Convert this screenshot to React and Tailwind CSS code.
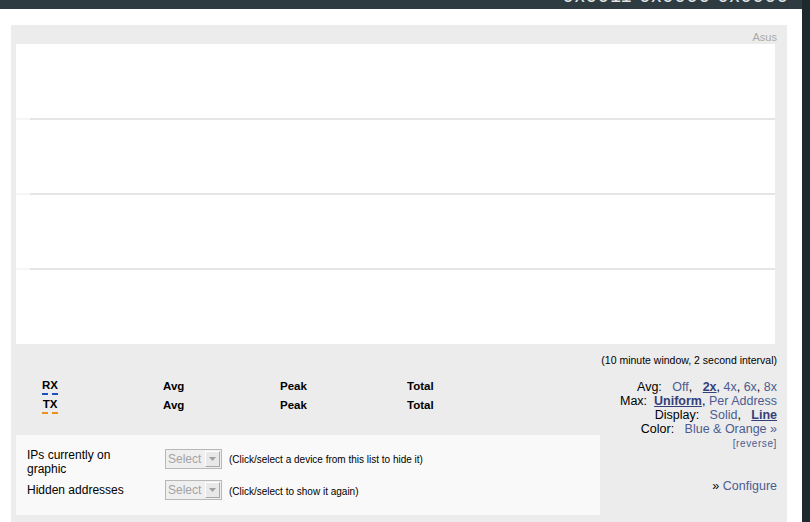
import React from 'react'

const font = { fontFamily: '"Liberation Sans", Arial, sans-serif' }

const Dash = ({ color }) => (
  <svg width="16" height="2" className="block">
    <rect x="0" y="0" width="6" height="2" fill={color} />
    <rect x="10" y="0" width="6" height="2" fill={color} />
  </svg>
)

const FakeSelect = () => (
  <div className="flex h-[20px] w-[57px] items-stretch border border-[#b8b8b8] bg-[#efefef]">
    <span className="flex-1 pl-[2px] text-[12px] leading-[18px] text-[#a3a3a3]">Select</span>
    <span className="my-[1px] mr-[1px] flex w-[15px] items-center justify-center border-l border-t border-white border-r border-b border-r-[#a8a8a8] border-b-[#a8a8a8] bg-[#e8e8e8]">
      <svg width="7" height="4"><polygon points="0,0 7,0 3.5,4" fill="#a0a0a0" /></svg>
    </span>
  </div>
)

const Link = ({ children, strong }) => (
  <span className={strong ? 'font-bold underline text-[#33407a]' : 'text-[#4c5c91]'}>{children}</span>
)

export default function App() {
  return (
    <div className="flex h-[522px] w-[810px] overflow-hidden bg-white text-black" style={font}>
      <div className="flex w-[802px] flex-col">
        <div className="relative h-[9px] overflow-hidden bg-[#2e3b40]">
          <div className="absolute right-[13px] top-[-15px] text-[20px] leading-[20px] tracking-[1px] text-[#dfe4e6]">
            0x0011 0x0000 0x0000
          </div>
        </div>
        <div className="ml-[11px] mt-[16px] w-[776px] flex-1 bg-[#ececec]">
          <div className="h-[19px] pr-[10px] text-right text-[11px] leading-[24px] text-[#aaaaaa]">Asus</div>
          <div className="ml-[5px] h-[300px] w-[759px] bg-white">
            <svg width="759" height="300" className="block">
              {[75, 150, 225].map((y) => (
                <g key={y}>
                  <rect x="0" y={y - 1} width="14" height="2" fill="#f6f6f6" />
                  <rect x="14" y={y - 1} width="745" height="2" fill="#e5e5e5" />
                </g>
              ))}
            </svg>
          </div>
          <div className="h-[25px] pr-[10px] pt-[10px] text-right text-[10.5px] leading-[12px]">
            (10 minute window, 2 second interval)
          </div>
          <div className="flex">
            <div className="ml-[5px] w-[584px]">
              <div className="pt-[8px] text-[11.5px] font-bold">
                {[['RX', '#1f4fc4'], ['TX', '#f28c1a']].map(([k, c]) => (
                  <div key={k} className="flex h-[19px] items-center">
                    <div className="w-[147px] pl-[26px]">
                      <div className="flex w-[16px] flex-col items-center">
                        <span className="leading-[12px]">{k}</span>
                        <span className="mt-[2px]"><Dash color={c} /></span>
                      </div>
                    </div>
                    <div className="w-[117px]">Avg</div>
                    <div className="w-[127px]">Peak</div>
                    <div>Total</div>
                  </div>
                ))}
              </div>
              <div className="mt-[20px] h-[80px] bg-[#f9f9f9] pl-[11px] pt-[13px] text-[12px]">
                <div className="flex items-start">
                  <div className="w-[138px] leading-[14px]">IPs currently on<br />graphic</div>
                  <div className="mt-[1px]"><FakeSelect /></div>
                  <div className="ml-[7px] mt-[6px] text-[10px] leading-[12px]">(Click/select a device from this list to hide it)</div>
                </div>
                <div className="mt-[4px] flex items-start">
                  <div className="mt-[3px] w-[138px] leading-[14px]">Hidden addresses</div>
                  <FakeSelect />
                  <div className="ml-[7px] mt-[6px] text-[10px] leading-[12px]">(Click/select to show it again)</div>
                </div>
              </div>
            </div>
            <div className="flex-1 pr-[10px] pt-[11px] text-right text-[12.5px] leading-[14px]">
              <div>Avg:&nbsp;&nbsp; <Link>Off</Link>,&nbsp;&nbsp; <Link strong>2x</Link>, <Link>4x</Link>, <Link>6x</Link>, <Link>8x</Link></div>
              <div>Max:&nbsp; <Link strong>Uniform</Link>, <Link>Per Address</Link></div>
              <div>Display:&nbsp;&nbsp; <Link>Solid</Link>,&nbsp;&nbsp; <Link strong>Line</Link></div>
              <div>Color:&nbsp;&nbsp; <Link>Blue &amp; Orange »</Link></div>
              <div className="text-[10px] leading-[16px] tracking-[0.6px] text-[#4c5c91]">[reverse]</div>
              <div className="mt-[27px]">» <Link>Configure</Link></div>
            </div>
          </div>
        </div>
      </div>
      <div className="w-[8px] bg-[#1d292d]" />
    </div>
  )
}
